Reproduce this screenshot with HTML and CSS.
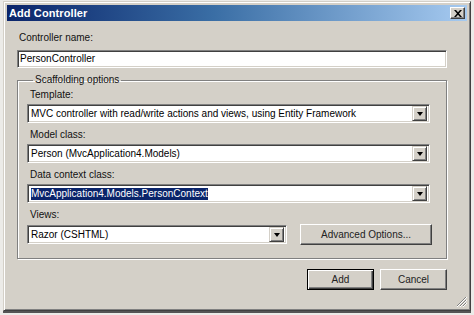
FILE: index.html
```html
<!DOCTYPE html>
<html>
<head>
<meta charset="utf-8">
<link rel="stylesheet" href="styles.css">
</head>
<body>
<div class="window">
  <div class="titlebar">
    <span class="title">Add Controller</span>
    <span class="close"><svg width="8" height="7" viewBox="0 0 8 7"><path d="M0 0h2l2 2.3L6 0h2L5 3.5 8 7H6L4 4.7 2 7H0l3-3.5z" fill="#000"/></svg></span>
  </div>
  <div class="content">
    <div class="label first">Controller name:</div>
    <div class="textbox">PersonController</div>
    <fieldset class="group">
      <legend>Scaffolding options</legend>
      <div class="label top">Template:</div>
      <div class="select"><span class="val">MVC controller with read/write actions and views, using Entity Framework</span><span class="drop"><i></i></span></div>
      <div class="label">Model class:</div>
      <div class="select"><span class="val">Person (MvcApplication4.Models)</span><span class="drop"><i></i></span></div>
      <div class="label">Data context class:</div>
      <div class="select"><span class="val"><span class="sel">MvcApplication4.Models.PersonContext</span></span><span class="drop"><i></i></span></div>
      <div class="label">Views:</div>
      <div class="row">
        <div class="select views"><span class="val">Razor (CSHTML)</span><span class="drop"><i></i></span></div>
        <div class="btn adv">Advanced Options...</div>
      </div>
    </fieldset>
    <div class="buttons">
      <div class="btn default">Add</div>
      <div class="btn">Cancel</div>
    </div>
  </div>
  <div class="grip"><svg width="11" height="11" viewBox="0 0 11 11"><path d="M10 1L1 10M10 4L4 10M10 7L7 10" stroke="#808080" stroke-width="1"/><path d="M11 1L1 11M11 4L4 11M11 7L7 11" stroke="#fff" stroke-width="1"/></svg></div>
</div>
</body>
</html>
```
FILE: styles.css
```css
html, body {
  margin: 0;
  padding: 0;
}
body {
  background: #ecebe8;
  width: 474px;
  height: 315px;
  overflow: hidden;
  font-family: "Liberation Sans", Arial, sans-serif;
  font-size: 10px;
  color: #000;
}
.window {
  position: relative;
  box-sizing: border-box;
  margin: 1px 0 0 3px;
  width: 468px;
  height: 310px;
  background: #d4d0c8;
  border: 1px solid;
  border-color: #d4d0c8 #404040 #404040 #d4d0c8;
  box-shadow: inset 1px 1px #fff, inset -1px -1px #808080, 0 2px 0 #555;
  padding: 3px;
}
.titlebar {
  height: 16px;
  display: flex;
  align-items: center;
  justify-content: space-between;
  background: linear-gradient(to right, #0a246a, #3a6ea5 45%, #a6caf0);
  padding: 0 2px 0 2px;
}
.title {
  color: #fff;
  font-weight: bold;
  font-size: 11px;
  letter-spacing: 0.1px;
}
.close {
  width: 15px;
  height: 12px;
  box-sizing: border-box;
  background: #d4d0c8;
  border: 1px solid;
  border-color: #fff #404040 #404040 #fff;
  box-shadow: inset -1px -1px #808080;
  display: flex;
  align-items: center;
  justify-content: center;
}
.content {
  padding: 0 20px 0 10px;
  display: flex;
  flex-direction: column;
}
.label {
  height: 12px;
  line-height: 12px;
  padding-left: 3px;
  margin-top: 6px;
  margin-bottom: 3px;
  color: #111;
}
.label.first {
  margin-top: 11px;
  margin-bottom: 6px;
  padding-left: 2px;
}
.label.top {
  margin-top: 3px;
}
.textbox, .select {
  box-sizing: border-box;
  height: 18px;
  background: #fff;
  border: 1px solid;
  border-color: #808080 #fff #fff #808080;
  box-shadow: inset 1px 1px #404040, inset -1px -1px #d4d0c8;
  line-height: 16px;
  padding-left: 2px;
  white-space: nowrap;
}
.select {
  height: 19px;
  display: flex;
  align-items: center;
  padding: 2px 2px 2px 3px;
  margin-right: 2px;
  line-height: 12px;
}
.val {
  flex: 1;
  overflow: hidden;
}
.sel {
  background: #0a246a;
  color: #fff;
  padding: 1px 0;
}
.drop {
  width: 15px;
  height: 15px;
  box-sizing: border-box;
  background: #d4d0c8;
  border: 1px solid;
  border-color: #d4d0c8 #404040 #404040 #d4d0c8;
  box-shadow: inset 1px 1px #fff, inset -1px -1px #808080;
  display: flex;
  align-items: center;
  justify-content: center;
}
.drop i {
  width: 0;
  height: 0;
  border-left: 3.5px solid transparent;
  border-right: 3.5px solid transparent;
  border-top: 4px solid #000;
}
.group {
  margin: 6px 0 0 0;
  padding: 0 14px 13px 9px;
  border: 1px solid #808080;
  box-shadow: 1px 1px #fff, inset 1px 1px #fff;
}
.group legend {
  padding: 0 2px;
  margin-left: 6px;
  line-height: 12px;
  color: #111;
}
.row {
  display: flex;
  align-items: center;
  justify-content: space-between;
}
.views {
  width: 260px;
}
.btn {
  box-sizing: border-box;
  height: 21px;
  background: #d4d0c8;
  border: 1px solid;
  border-color: #fff #404040 #404040 #fff;
  box-shadow: inset -1px -1px #808080, inset 1px 1px #d4d0c8;
  display: flex;
  align-items: center;
  justify-content: center;
  color: #222;
}
.adv {
  width: 132px;
}
.buttons {
  display: flex;
  justify-content: flex-end;
  gap: 6px;
  margin-top: 10px;
}
.buttons .btn {
  width: 67px;
}
.btn.default {
  border: 1px solid #000;
  box-shadow: inset 1px 1px #fff, inset -1px -1px #404040, inset -2px -2px #808080;
}
.grip {
  position: absolute;
  right: 3px;
  bottom: 3px;
  width: 11px;
  height: 11px;
}
```
